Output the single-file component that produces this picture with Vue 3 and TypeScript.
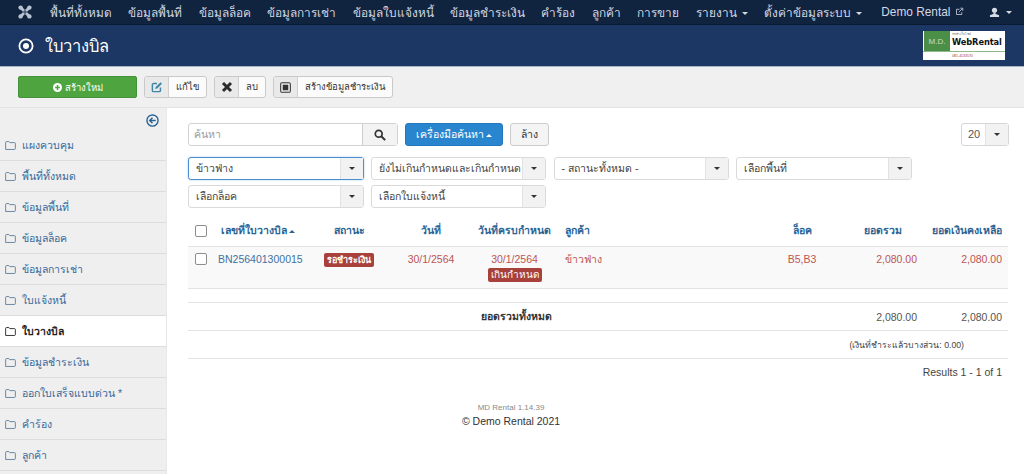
<script setup lang="ts">
const navItems = [
  { label: 'พื้นที่ทั้งหมด' }, { label: 'ข้อมูลพื้นที่' }, { label: 'ข้อมูลล็อค' }, { label: 'ข้อมูลการเช่า' },
  { label: 'ข้อมูลใบแจ้งหนี้' }, { label: 'ข้อมูลชำระเงิน' }, { label: 'คำร้อง' }, { label: 'ลูกค้า' }, { label: 'การขาย' },
  { label: 'รายงาน', caret: true }, { label: 'ตั้งค่าข้อมูลระบบ', caret: true },
]
const sideItems = ['แผงควบคุม', 'พื้นที่ทั้งหมด', 'ข้อมูลพื้นที่', 'ข้อมูลล็อค', 'ข้อมูลการเช่า', 'ใบแจ้งหนี้', 'ใบวางบิล', 'ข้อมูลชำระเงิน', 'ออกใบเสร็จแบบด่วน *', 'คำร้อง', 'ลูกค้า']
const row1 = [
  { label: 'ข้าวฟ่าง', active: true },
  { label: 'ยังไม่เกินกำหนดและเกินกำหนด' },
  { label: '- สถานะทั้งหมด -' },
  { label: 'เลือกพื้นที่' },
]
const row2 = [{ label: 'เลือกล็อค' }, { label: 'เลือกใบแจ้งหนี้' }]
</script>

<template>
  <div class="page">
    <nav class="navbar">
      <svg class="joomla" viewBox="0 0 14 14" width="14" height="14">
        <g fill="#b9c3d2">
          <circle cx="2.600" cy="2.600" r="2.200" />
          <circle cx="11.400" cy="2.600" r="2.200" />
          <circle cx="2.600" cy="11.400" r="2.200" />
          <circle cx="11.400" cy="11.400" r="2.200" />
        </g>
        <path d="M2.600 2.600 11.400 11.400M11.400 2.600 2.600 11.400" stroke="#b9c3d2" stroke-width="2.800" />
        <path d="M7 4.800 9.200 7 7 9.200 4.800 7z" fill="#4d5f7b" />
      </svg>
      <a v-for="n in navItems" :key="n.label" class="nav-link">{{ n.label }}<i v-if="n.caret" class="caret nav-caret"></i></a>
      <a class="nav-link demo">Demo Rental
        <svg viewBox="0 0 12 12" width="9" height="9" class="ext">
          <path d="M9 7v3H2V3h4" fill="none" stroke="#b8c2d2" stroke-width="1.200" />
          <path d="M5 7 10 2M7 1.600h3.400V5" fill="none" stroke="#b8c2d2" stroke-width="1.200" />
        </svg>
      </a>
      <span class="nav-user">
        <svg viewBox="0 0 12 12" width="11" height="11">
          <circle cx="6" cy="3.600" r="2.800" fill="#d5dbe5" />
          <path d="M5 6h2v1.400l4 1.600v2H1V9l4-1.600z" fill="#d5dbe5" />
        </svg>
        <i class="caret nav-caret"></i>
      </span>
    </nav>

    <header class="header">
      <svg viewBox="0 0 16 16" width="16" height="16" class="target">
        <circle cx="8" cy="8" r="6.600" fill="none" stroke="#fff" stroke-width="1.800" />
        <circle cx="8" cy="8" r="3" fill="#fff" />
      </svg>
      <h1 class="title">ใบวางบิล</h1>
      <div class="logo">
        <div class="logo-top">
          <div class="logo-md">M.D.</div>
          <div class="logo-name"><small>รับทำเว็บไซต์</small><b>WebRental</b></div>
        </div>
        <div class="logo-tel">081-4133570</div>
      </div>
    </header>

    <div class="toolbar">
      <button class="btn-new">
        <svg viewBox="0 0 12 12" width="9" height="9"><circle cx="6" cy="6" r="6" fill="#fff" /><path d="M6 2.800v6.400M2.800 6h6.400" stroke="#4ea53f" stroke-width="2" /></svg>
        สร้างใหม่
      </button>
      <div class="tool">
        <span class="tool-ic">
          <svg viewBox="0 0 14 14" width="12" height="12">
            <path d="M11 7.500V11a1.400 1.400 0 0 1-1.400 1.400H3A1.400 1.400 0 0 1 1.600 11V4.400A1.400 1.400 0 0 1 3 3h4" fill="none" stroke="#3f87a6" stroke-width="1.700" />
            <path d="M5 9.200 5.500 7l5.600-5.600 1.700 1.700L7.200 8.700z" fill="#3f87a6" />
          </svg>
        </span>
        <span class="tool-txt">แก้ไข</span>
      </div>
      <div class="tool">
        <span class="tool-ic">
          <svg viewBox="0 0 12 12" width="12" height="12"><path d="M2 2l8 8M10 2l-8 8" stroke="#2b2b2b" stroke-width="3" /></svg>
        </span>
        <span class="tool-txt">ลบ</span>
      </div>
      <div class="tool">
        <span class="tool-ic">
          <svg viewBox="0 0 12 12" width="11" height="11"><rect x=".7" y=".7" width="10.600" height="10.600" rx="1.500" fill="none" stroke="#333" stroke-width="1.100" /><rect x="3" y="3" width="6" height="6" fill="#333" /></svg>
        </span>
        <span class="tool-txt">สร้างข้อมูลชำระเงิน</span>
      </div>
    </div>

    <div class="body">
      <aside class="sidebar">
        <div class="collapse">
          <svg viewBox="0 0 14 14" width="13" height="13">
            <circle cx="7" cy="7" r="6" fill="none" stroke="#2a6496" stroke-width="1.500" />
            <path d="M10.500 7h-6M7 4 4 7l3 3" fill="none" stroke="#2a6496" stroke-width="1.600" />
          </svg>
        </div>
        <a v-for="s in sideItems" :key="s" class="side-item" :class="{ on: s === 'ใบวางบิล' }">
          <svg viewBox="0 0 12 10" width="11" height="9" class="folder">
            <path d="M.6 9.400V1.600a1 1 0 0 1 1-1h2.600l1 1.200h5.200a1 1 0 0 1 1 1v5.600a1 1 0 0 1-1 1z" fill="none" stroke="currentColor" stroke-width="1" />
          </svg>
          {{ s }}
        </a>
      </aside>

      <main class="main">
        <div class="search-row">
          <div class="search">
            <span class="search-input">ค้นหา</span>
            <span class="search-btn">
              <svg viewBox="0 0 14 14" width="12" height="12"><circle cx="5.500" cy="5.500" r="4" fill="none" stroke="#333" stroke-width="2" /><path d="M8.500 8.500 13 13" stroke="#333" stroke-width="2.400" /></svg>
            </span>
          </div>
          <button class="btn-tools">เครื่องมือค้นหา <i class="caret up white"></i></button>
          <button class="btn-clear">ล้าง</button>
          <div class="limit">
            <span class="limit-val">20</span>
            <span class="sel-arrow"><i class="caret dark"></i></span>
          </div>
        </div>

        <div class="filters">
          <div v-for="f in row1" :key="f.label" class="sel" :class="{ active: f.active }">
            <span class="sel-val">{{ f.label }}</span>
            <span class="sel-arrow"><i class="caret dark"></i></span>
          </div>
        </div>
        <div class="filters second">
          <div v-for="f in row2" :key="f.label" class="sel">
            <span class="sel-val">{{ f.label }}</span>
            <span class="sel-arrow"><i class="caret dark"></i></span>
          </div>
        </div>

        <table class="grid">
          <colgroup>
            <col class="c-chk" /><col class="c-num" /><col class="c-status" /><col class="c-date" />
            <col class="c-due" /><col class="c-cust" /><col class="c-lot" /><col class="c-total" /><col class="c-bal" />
          </colgroup>
          <thead>
            <tr>
              <th class="chk"><span class="box"></span></th>
              <th class="center">เลขที่ใบวางบิล <i class="caret up blue"></i></th>
              <th class="center">สถานะ</th>
              <th class="center">วันที่</th>
              <th class="center">วันที่ครบกำหนด</th>
              <th class="left cust">ลูกค้า</th>
              <th class="center">ล็อค</th>
              <th class="right head-total">ยอดรวม</th>
              <th class="right">ยอดเงินคงเหลือ</th>
            </tr>
          </thead>
          <tbody>
            <tr class="data">
              <td class="chk"><span class="box"></span></td>
              <td class="num"><a>BN256401300015</a></td>
              <td class="center"><span class="label">รอชำระเงิน</span></td>
              <td class="center">30/1/2564</td>
              <td class="center">30/1/2564<br /><span class="label plain">เกินกำหนด</span></td>
              <td class="left cust">ข้าวฟ่าง</td>
              <td class="center">B5,B3</td>
              <td class="right">2,080.00</td>
              <td class="right">2,080.00</td>
            </tr>
            <tr class="spacer"><td colspan="9"></td></tr>
            <tr class="total">
              <td colspan="5" class="total-label">ยอดรวมทั้งหมด</td>
              <td></td><td></td>
              <td class="right">2,080.00</td>
              <td class="right">2,080.00</td>
            </tr>
            <tr class="paid"><td colspan="9">(เงินที่ชำระแล้วบางส่วน: 0.00)</td></tr>
          </tbody>
        </table>

        <div class="results">Results 1 - 1 of 1</div>
        <div class="version">MD Rental 1.14.39</div>
        <div class="copy">© Demo Rental 2021</div>
      </main>
    </div>
  </div>
</template>

<style>
html, body { margin: 0; background: #fff; overflow: hidden; }
</style>

<style scoped>
.page { width: 1024px; height: 474px; overflow: hidden; font-family: "Liberation Sans", Arial, sans-serif; font-size: 11px; color: #333; }
.navbar { height: 24px; background: #10233f; display: flex; align-items: center; padding-left: 18px; color: #d3d9e3; border-bottom: 1px solid #0b1a33; }
.joomla { margin-right: 18px; flex: none; }
.nav-link { font-size: 11.850px; margin-right: 16.400px; white-space: nowrap; }
.nav-link.demo { margin-right: 0; margin-left: 3px; }
.ext { margin-left: 1px; }
.nav-user { margin-left: auto; margin-right: 12px; display: flex; align-items: center; gap: 6px; }
.caret { display: inline-block; width: 0; height: 0; border-left: 3px solid transparent; border-right: 3px solid transparent; border-top: 3px solid #333; vertical-align: middle; }
.nav-caret { border-top-color: #d3d9e3; margin-left: 5px; }
.nav-user .nav-caret { margin-left: 0; }
.caret.up { border-top: 0; border-bottom: 3px solid #333; }
.caret.up.white { border-bottom-color: #fff; }
.caret.up.blue { border-bottom-color: #2a6496; }
.header { height: 41px; background: #1c3764; border-bottom: 1px solid #a9b3c6; display: flex; align-items: center; padding-left: 18px; color: #fff; position: relative; }
.target { margin-right: 11px; }
.title { font-size: 16.500px; font-weight: 400; margin: 0; }
.logo { position: absolute; left: 923px; top: 6px; width: 82px; height: 29px; background: #fff; display: flex; flex-direction: column; }
.logo-top { height: 20px; display: flex; border-bottom: 1px solid #8fb98b; }
.logo-md { width: 26px; margin-left: 1px; background: #4b8e48; color: #c8dcc8; font-size: 8px; display: flex; align-items: center; justify-content: center; }
.logo-name { display: flex; flex-direction: column; padding-left: 2px; color: #111; line-height: 1; overflow: hidden; }
.logo-name small { font-size: 3px; height: 6px; color: #666; padding-top: 2px; box-sizing: border-box; }
.logo-name b { font-size: 8.300px; font-family: "DejaVu Sans", sans-serif; letter-spacing: -.1px; line-height: 11px; }
.logo-tel { font-size: 3.500px; color: #a33; text-align: center; line-height: 8px; padding-right: 3px; }
.toolbar { height: 40px; background: #f0f0f0; border-bottom: 1px solid #e3e3e3; display: flex; align-items: center; padding-left: 18px; gap: 7px; }
.btn-new { width: 119px; height: 22px; background: #4ea53f; border: 1px solid #43923a; border-radius: 2px; color: #fff; font: 9.500px "Liberation Sans", sans-serif; display: flex; align-items: center; justify-content: center; gap: 3px; padding: 0; }
.tool { height: 20px; border: 1px solid #c9c9c9; border-radius: 3px; display: flex; background: #fbfbfb; font-size: 9.500px; color: #333; }
.tool-ic { width: 23px; background: #e9e9e9; border-right: 1px solid #cfcfcf; display: flex; align-items: center; justify-content: center; border-radius: 3px 0 0 3px; }
.tool-txt { padding: 0 7px; line-height: 20px; white-space: nowrap; }
.body { display: flex; }
.sidebar { width: 167px; flex: none; background: #efefef; height: 367px; border-right: 1px solid #e8e8e8; box-sizing: border-box; }
.collapse { height: 22px; padding: 2px 7px 0 0; box-sizing: border-box; display: flex; justify-content: flex-end; align-items: center; }
.side-item { display: flex; align-items: center; height: 30px; padding-left: 5px; border-bottom: 1px solid #dcdcdc; color: #38699a; font-size: 10.500px; gap: 6px; white-space: nowrap; }
.side-item .folder { color: #5e7d9c; }
.side-item.on { background: #fff; color: #222; font-weight: 700; }
.side-item.on .folder { color: #222; }
.main { flex: 1; padding: 15px 15px 0 21px; min-width: 0; }
.search-row { display: flex; align-items: flex-start; height: 23px; }
.search { display: flex; width: 210px; height: 23px; border: 1px solid #d2d2d2; border-radius: 3px; box-sizing: border-box; }
.search-input { flex: 1; padding-left: 5px; color: #999; font-size: 10.500px; line-height: 21px; }
.search-btn { width: 34px; background: #f3f3f3; border-left: 1px solid #ccc; display: flex; align-items: center; justify-content: center; }
.btn-tools { margin-left: 7px; width: 98px; height: 23px; background: #2a85cf; border: 1px solid #2277bd; border-radius: 3px; color: #fff; font: 10.500px "Liberation Sans", sans-serif; padding: 0; white-space: nowrap; }
.btn-clear { margin-left: 7px; width: 39px; height: 23px; background: #f4f4f4; border: 1px solid #ccc; border-radius: 3px; color: #333; font: 10.500px "Liberation Sans", sans-serif; padding: 0; }
.limit { margin-left: auto; width: 48px; height: 23px; display: flex; border: 1px solid #d6d6d6; border-radius: 3px; box-sizing: border-box; font-size: 11px; color: #555; }
.limit-val { flex: 1; line-height: 21px; padding-left: 6px; }
.limit .sel-arrow { width: 22px; }
.filters { display: flex; gap: 7.200px; margin-top: 11px; }
.filters.second { margin-top: 5px; }
.sel { width: 175.600px; height: 23px; box-sizing: border-box; border: 1px solid #dadada; border-radius: 3px; display: flex; background: #fff; color: #444; font-size: 10.500px; }
.sel.active { border-color: #4a90d0; box-shadow: 0 0 2px rgba(74, 144, 208, .5); }
.sel-val { flex: 1; min-width: 0; padding-left: 7px; line-height: 20px; white-space: nowrap; overflow: hidden; }
.sel-arrow { width: 22px; flex: none; background: #f2f2f2; border-left: 1px solid #e2e2e2; display: flex; align-items: center; justify-content: center; }
.grid { width: 820px; margin-top: 7px; border-collapse: collapse; table-layout: fixed; font-size: 10.500px; }
.c-chk { width: 25px; }
.c-num { width: 90px; }
.c-status { width: 92px; }
.c-date { width: 72px; }
.c-due { width: 95px; }
.c-cust { width: 210px; }
.c-lot { width: 60px; }
.c-total { width: 91px; }
.c-bal { width: 85px; }
.grid th { height: 31px; padding: 0; font-weight: 700; color: #2a6496; font-size: 10.500px; border-bottom: 1px solid #e3e3e3; white-space: nowrap; }
.center { text-align: center; }
.left { text-align: left; }
.cust { padding-left: 3px !important; }
.right { text-align: right; padding-right: 6px !important; }
.grid th.head-total { padding-right: 21px !important; }
.chk { text-align: center; }
.box { display: inline-block; width: 10px; height: 10px; border: 1px solid #8d8d8d; border-radius: 2px; background: #fff; vertical-align: middle; }
.data { background: #f9f9f9; color: #bd5553; border-bottom: 1px solid #e3e3e3; }
.data td { padding: 5px 0 0; height: 36px; vertical-align: top; line-height: 15px; }
.data .chk { padding-top: 4px; }
.num a { color: #3f72a2; padding-left: 5px; display: block; white-space: nowrap; }
.label { display: inline-block; background: #a8403c; color: #fff; font-size: 9px; font-weight: 700; line-height: 14px; padding: 0 3px; border-radius: 2px; white-space: nowrap; }
.label.plain { font-weight: 400; font-size: 10px; }
.spacer td { height: 13px; padding: 0; border-bottom: 1px solid #e3e3e3; }
.total td { height: 27px; padding: 0; border-bottom: 1px solid #e3e3e3; color: #555; }
.total .total-label { text-align: right; font-weight: 700; color: #333; padding-right: 10px; }
.paid td { height: 27px; padding: 0 44px 0 0; text-align: right; font-size: 8.700px; color: #444; border-bottom: 1px solid #e3e3e3; }
.results { text-align: right; padding-right: 7px; margin-top: 6px; font-size: 10.500px; color: #444; line-height: 14px; }
.version { margin-top: 24px; font-size: 8px; color: #8a8a8a; text-align: center; line-height: 10px; width: 646px; }
.copy { margin-top: 1px; font-size: 10.500px; color: #333; text-align: center; width: 646px; line-height: 14px; }
</style>
